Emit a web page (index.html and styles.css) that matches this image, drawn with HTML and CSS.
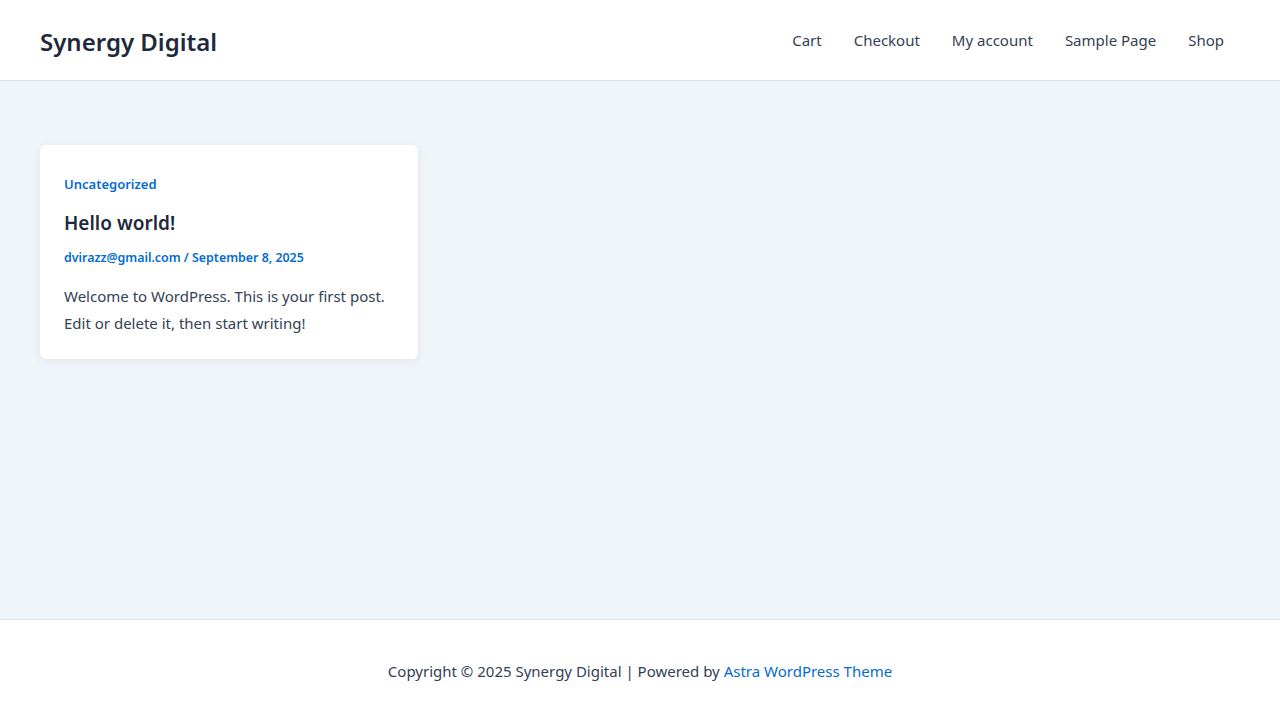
FILE: index.html
```html
<!DOCTYPE html>
<html lang="en">
<head>
<meta charset="utf-8">
<title>Synergy Digital</title>
<link rel="stylesheet" href="styles.css">
</head>
<body>
<header class="site-header">
  <a class="site-title" href="#">Synergy Digital</a>
  <nav class="main-nav">
    <a href="#">Cart</a>
    <a href="#">Checkout</a>
    <a href="#">My account</a>
    <a href="#">Sample Page</a>
    <a href="#">Shop</a>
  </nav>
</header>
<main class="site-content">
  <article class="post-card">
    <a class="post-cat" href="#">Uncategorized</a>
    <h2 class="post-title">Hello world!</h2>
    <div class="post-meta"><a href="#">dvirazz@gmail.com</a> / <a href="#">September 8, 2025</a></div>
    <p class="post-excerpt">Welcome to WordPress. This is your first post. Edit or delete it, then start writing!</p>
  </article>
</main>
<footer class="site-footer">
  <p>Copyright © 2025 Synergy Digital | Powered by <a href="#">Astra WordPress Theme</a></p>
</footer>
</body>
</html>
```
FILE: styles.css
```css
* { box-sizing: border-box; }
html, body { margin: 0; padding: 0; }
body {
  font-family: "Noto Sans", "Open Sans", sans-serif;
  color: #334155;
  background: #f0f5fa;
  height: 720px;
  display: flex;
  flex-direction: column;
}
a { text-decoration: none; }
.site-header {
  height: 81px;
  background: #fff;
  border-bottom: 1px solid #dde3ea;
  display: flex;
  align-items: center;
  justify-content: space-between;
  padding: 0 40px;
}
.site-title {
  font-size: 24px;
  font-weight: 600;
  color: #1e293b;
  margin-top: 2px;
}
.main-nav {
  display: flex;
}
.main-nav a {
  color: #334155;
  font-size: 15px;
  padding: 0 16px;
}
.site-content {
  flex: 1;
  padding: 64px 40px;
}
.post-card {
  width: 378px;
  background: #fff;
  border-radius: 6px;
  box-shadow: 0 2px 10px rgba(100, 116, 139, 0.12);
  padding: 30px 24px 22px;
}
.post-cat {
  display: block;
  color: #046bd2;
  font-size: 13px;
  font-weight: 600;
  line-height: 18px;
}
.post-title {
  margin: 17px 0 0;
  font-size: 19px;
  font-weight: 600;
  line-height: 26px;
  color: #1e293b;
}
.post-meta {
  margin-top: 12px;
  font-size: 12.4px;
  font-weight: 600;
  color: #046bd2;
  line-height: 19px;
}
.post-meta a { color: #046bd2; }
.post-excerpt {
  margin: 16px 0 0;
  font-size: 15px;
  line-height: 27px;
}
.site-footer {
  height: 101px;
  background: #fff;
  border-top: 1px solid #dde3ea;
  display: flex;
  align-items: center;
  justify-content: center;
}
.site-footer p {
  margin: 0;
  font-size: 15px;
  padding-top: 2px;
}
.site-footer a { color: #046bd2; }
```
